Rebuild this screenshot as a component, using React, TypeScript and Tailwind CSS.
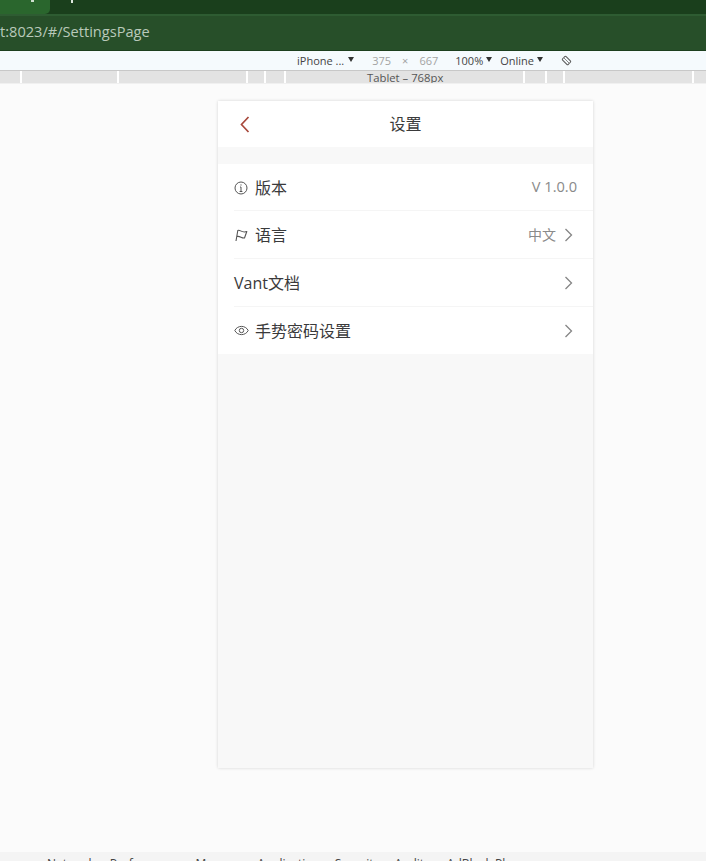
import React from "react";

const sans = '"Open Sans", "Noto Sans CJK SC", sans-serif';

function Chevron() {
  return (
    <svg width="9" height="14" viewBox="0 0 9 14" fill="none" stroke="#858585" strokeWidth="1.3" className="shrink-0">
      <path d="M1.5 1 L7.5 7 L1.5 13" />
    </svg>
  );
}

function Caret({ className }: { className: string }) {
  return (
    <svg className={className} width="6" height="5" viewBox="0 0 6 5" fill="#333">
      <path d="M0 0 H6 L3 5 Z" />
    </svg>
  );
}

function Row({ icon, label, value, valueClass, chevron, border = true, heightClass }: { icon?: React.ReactNode; label: string; value?: string; valueClass?: string; chevron?: boolean; border?: boolean; heightClass: string }) {
  return (
    <div className={`relative flex items-center pl-4 pr-5 bg-white ${heightClass}`}>
      {icon && <span className="w-[21px] h-4 flex items-center shrink-0">{icon}</span>}
      <span className="text-base text-[#3a3a3b]">{label}</span>
      <span className="flex-1" />
      {value && <span className={valueClass}>{value}</span>}
      {chevron && <span className="ml-2 flex"><Chevron /></span>}
      {border && <div className="absolute left-4 right-0 bottom-0 h-px bg-[#f5f5f5]" />}
    </div>
  );
}

const rulerCells = [20, 95, 127, 16, 18, 237, 20, 16, 127, 60];

export default function App() {
  return (
    <div className="w-[706px] h-[861px] overflow-hidden flex flex-col bg-[#fbfbfb]" style={{ fontFamily: sans }}>
      {/* browser tabs */}
      <div className="h-[14px] shrink-0 bg-[#1a3f1c] flex">
        <div className="w-[50px] h-full bg-[#2a662d] rounded-br-[5px] flex justify-end pr-4">
          <span className="w-[3px] h-[2px] bg-[#cfe0cf]" />
        </div>
        <div className="ml-[21px] w-[2px] h-[3px] bg-[#dfe8df]" />
      </div>
      {/* address bar */}
      <div className="h-[37px] shrink-0 bg-[#274f29] border-t-2 border-[#2e5c32] border-b border-b-[#1c3f1e] flex items-center overflow-hidden pb-[2px]">
        <span className="text-[14.6px] text-[#b9c9ba] whitespace-nowrap">t:8023/#/SettingsPage</span>
      </div>
      {/* device toolbar */}
      <div className="h-5 shrink-0 bg-[#f5fafd] border-b border-[#c8c8c8] flex items-center text-[#444] pl-[297px] pt-[2px]">
        <span className="text-[11px]">iPhone ...</span>
        <Caret className="ml-[4px] -mt-1" />
        <span className="ml-[18px] text-[11px] text-[#a3a3a3]">375</span>
        <span className="ml-[11px] text-[11px] text-[#a3a3a3]">×</span>
        <span className="ml-[11px] text-[11px] text-[#a3a3a3]">667</span>
        <span className="ml-[17px] text-[11px]">100%</span>
        <Caret className="ml-[3px] -mt-1" />
        <span className="ml-2 text-[11px]">Online</span>
        <Caret className="ml-[3px] -mt-1" />
        <svg className="ml-[18px] -mt-[2px]" width="11" height="11" viewBox="0 0 11 11" fill="none" stroke="#555" strokeWidth="1">
          <rect x="1.5" y="3" width="8" height="5" rx="1" transform="rotate(45 5.5 5.5)" />
          <path d="M2 2 L9 9" stroke="#888" />
        </svg>
      </div>
      {/* media query ruler */}
      <div className="h-[13px] shrink-0 relative flex gap-[2px] bg-white overflow-hidden border-b border-[#f0f0f0]">
        {rulerCells.map((w, i) => (
          <div key={i} className="h-full bg-[#e3e3e3] shrink-0" style={{ width: w }} />
        ))}
        <span className="absolute left-[367px] top-[-1px] text-[11.3px] leading-[15px] text-[#555]">Tablet – 768px</span>
      </div>
      {/* page */}
      <div className="flex-1 min-h-0 pt-[17px] pl-[218px]">
        <div className="w-[375px] h-[667px] bg-[#f8f8f8] shadow-[0_0_3px_rgba(0,0,0,0.16)]">
          <div className="relative h-[46px] bg-white flex items-center justify-center">
            <svg className="absolute left-[22px] top-[15px]" width="10" height="17" viewBox="0 0 10 17" fill="none" stroke="#a8493c" strokeWidth="1.7">
              <path d="M8.5 1 L1.5 8.5 L8.5 16" />
            </svg>
            <span className="text-base text-[#3a3a3b]">设置</span>
          </div>
          <div className="h-[17px]" />
          <Row
            heightClass="h-[47px]"
            label="版本"
            icon={
              <svg width="14" height="14" viewBox="0 0 14 14" fill="none" stroke="#555" strokeWidth="1">
                <circle cx="7" cy="7" r="6" />
                <path d="M7 6 V10.5 M5.6 10.5 H8.4 M6 6 H7" />
                <circle cx="7" cy="3.9" r="0.6" fill="#555" stroke="none" />
              </svg>
            }
            value="V 1.0.0"
            valueClass="text-[14.6px] text-[#8a8a8a] -mr-1 -mt-[2px]"
          />
          <Row
            heightClass="h-12"
            label="语言"
            icon={
              <svg width="14" height="14" viewBox="0 0 14 14" fill="none" stroke="#555" strokeWidth="1.1" strokeLinejoin="round">
                <path d="M2 13 L3.8 2.5 C6 1 7.5 5.5 12.8 3.5 L10.5 10 C7.5 10.5 6 7.5 2.9 8.5" />
              </svg>
            }
            value="中文"
            valueClass="text-sm text-[#8a8a8a]"
            chevron
          />
          <Row heightClass="h-12" label="Vant文档" chevron />
          <Row
            heightClass="h-[47px]"
            label="手势密码设置"
            border={false}
            icon={
              <svg width="15" height="11" viewBox="0 0 15 11" fill="none" stroke="#555" strokeWidth="1">
                <path d="M0.8 5.5 C3.5 0 11.5 0 14.2 5.5 C11.5 11 3.5 11 0.8 5.5 Z" />
                <circle cx="7.5" cy="5.5" r="2.2" />
              </svg>
            }
            chevron
          />
        </div>
      </div>
      {/* drawer tabs */}
      <div className="h-[9px] shrink-0 bg-[#f4f4f4] overflow-hidden flex pl-[47px] text-xs leading-[14px] text-[#444] whitespace-nowrap">
        <span className="pt-[5px]">Network</span>
        <span className="pt-[5px] ml-[15px]">Performance</span>
        <span className="pt-[5px] ml-[13px]">Memory</span>
        <span className="pt-[5px] ml-[15px]">Application</span>
        <span className="pt-[5px] ml-[15px]">Security</span>
        <span className="pt-[5px] ml-[15px]">Audits</span>
        <span className="pt-[5px] ml-[17px]">AdBlock Plus</span>
      </div>
    </div>
  );
}
